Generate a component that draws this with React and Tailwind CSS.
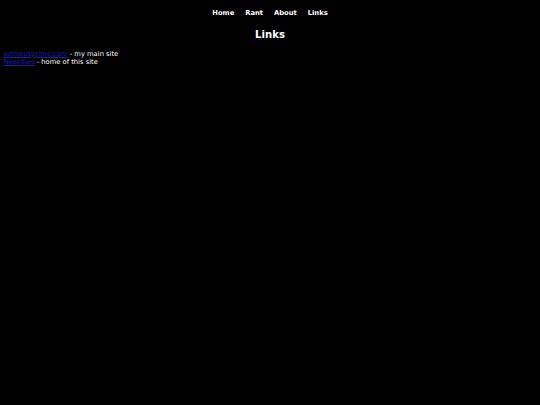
import React from 'react';

const NAV = ['Home', 'Rant', 'About', 'Links'];

const SITES = [
  { name: 'sethicusprime.com', note: 'my main site' },
  { name: 'Neocities', note: 'home of this site' },
];

export default function App() {
  return (
    <div className="min-h-[405px] w-full bg-black text-white font-['DejaVu_Sans',sans-serif] text-[6.75px] leading-[7.86px] px-[3.4px]">
      <nav className="flex justify-center gap-[11px] pt-[9.7px] font-bold">
        {NAV.map((item) => (
          <a key={item} href="#" className="text-white no-underline">
            {item}
          </a>
        ))}
      </nav>

      <h2 className="mt-[11.4px] text-center text-[10.1px] leading-[11.76px] font-bold">Links</h2>

      <div className="mt-[10px]">
        {SITES.map((s) => (
          <div key={s.name}>
            <a href="#" className="text-[#1a1ab8] underline">
              {s.name}
            </a>
            {' - '}
            {s.note}
          </div>
        ))}
      </div>
    </div>
  );
}
